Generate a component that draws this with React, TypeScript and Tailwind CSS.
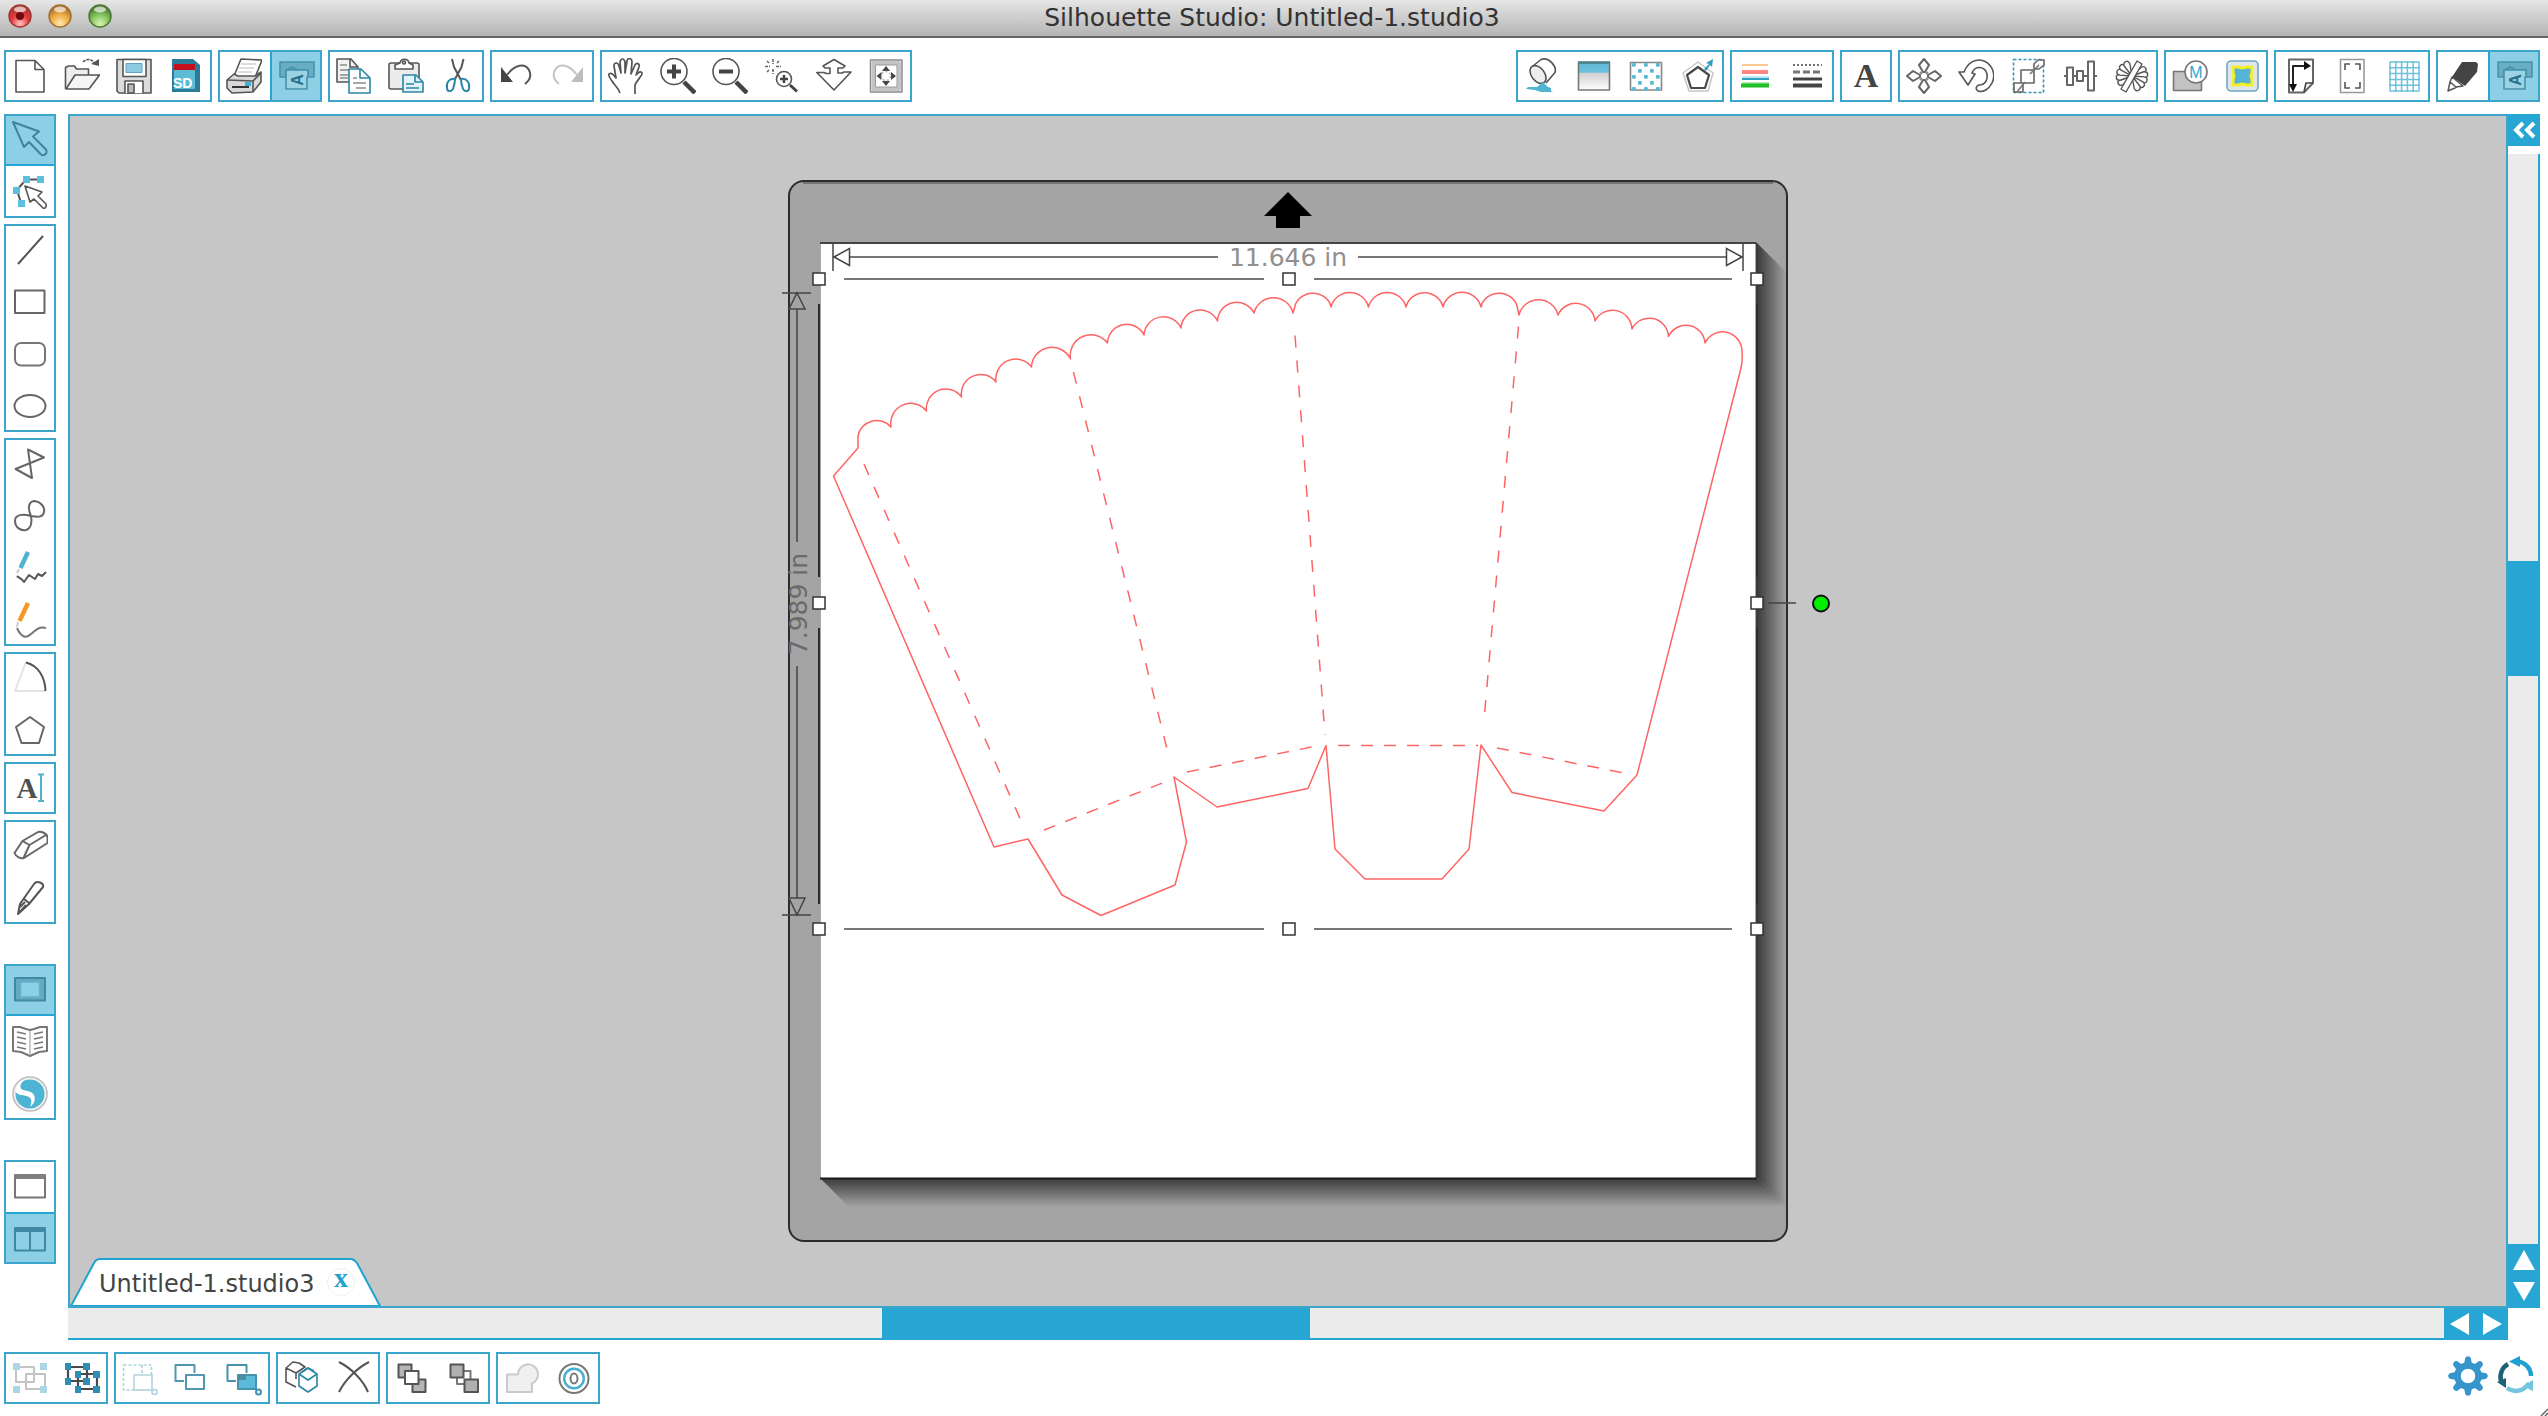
import React, { ReactNode } from "react";

const INK = "#555555";
const BLUE = "#2a86a5";
const SKY = "#4fb3d1";

function Ico({ children, stroke = INK, w = 1.6 }: { children: ReactNode; stroke?: string; w?: number }) {
  return (
    <svg viewBox="0 0 36 36" className="size-9 shrink-0" fill="none" stroke={stroke} strokeWidth={w} strokeLinejoin="round" aria-hidden="true">
      {children}
    </svg>
  );
}

type Tool = { label: string; icon: ReactNode; active?: boolean };

const cutterIcon = (
  <Ico stroke="#4792aa">
    <path d="M1 4h34v15h-6v-7H7v7H1z" fill="#69adc4" />
    <path d="M7 12h22v7h-1v12H7z" fill="#9bd3e4" />
    <path d="M8 12l5-3 6 3" />
    <text x="24" y="22" transform="rotate(-90 24 22)" textAnchor="middle" fontSize="16" fontWeight="700" fontFamily="Liberation Sans, sans-serif" fill="#25728c" stroke="none">A</text>
  </Ico>
);

const fileTools: Tool[] = [
  { label: "New", icon: <Ico><path d="M4 2.5h19l9 9V34H4zM23 2.5v9h9" /></Ico> },
  {
    label: "Open",
    icon: (
      <Ico>
        <path d="M1.500 31V9.500l3-1.500h6l2 3h12v6" fill="#eeeeee" />
        <path d="M2 31l9-14h24.500L25 31z" fill="#f5f5f5" />
        <path d="M19 4c4-4 9-3 12 2" strokeDasharray="3 1" />
        <path d="M27 6l8 2V1z" fill={INK} stroke="none" />
      </Ico>
    ),
  },
  {
    label: "Save",
    icon: (
      <Ico>
        <path d="M1 1.500h34V35H3l-2-2z" fill="#dcdcdc" />
        <path d="M7 1.500h23v17H7z" fill="#fff" />
        <path d="M10 5.500h16v9H10z" fill="#8fcbe0" stroke="#5aa7c4" strokeWidth="1" />
        <path d="M9 35V23h18v12" fill="#fff" />
        <path d="M12 26h6v9h-6z" fill="#bbb" />
      </Ico>
    ),
  },
  {
    label: "Save to SD card",
    icon: (
      <Ico>
        <path d="M4 1h21l7 6v27H4z" fill="#2a7c99" stroke="none" />
        <path d="M6 12h21v19H6z" fill="#5cbbd5" stroke="none" />
        <path d="M6 6h21v6H6z" fill="#c4101c" stroke="none" />
        <text x="5" y="30" fontSize="14" fontWeight="700" fontFamily="Liberation Sans, sans-serif" fill="#fff" stroke="none">SD</text>
      </Ico>
    ),
  },
];

const printTools: Tool[] = [
  {
    label: "Print",
    icon: (
      <Ico>
        <path d="M8 18l7-17 21 1-6 15" fill="#fff" />
        <path d="M15 6l15 0M13 10h15M12 14h14" stroke="#bbb" strokeWidth="1.200" />
        <path d="M1 22l7-6 4 2h17l6-4v10l-8 10-21 1-5-5z" fill="#d9d9d9" />
        <path d="M1 22l26 1 8-8M27 23v11" />
        <path d="M6 29h17" stroke="#333" strokeWidth="2" />
        <path d="M19 24h6v4h-6z" fill="#3fb0d5" stroke="none" />
      </Ico>
    ),
  },
  { label: "Send to Silhouette", icon: cutterIcon, active: true },
];

const clipTools: Tool[] = [
  {
    label: "Copy",
    icon: (
      <Ico>
        <path d="M1 1h14l7 8v15H1z" fill="#f2f2f2" />
        <path d="M14 1v8h8" />
        <path d="M4 7h7M4 12h10M4 17h9M4 20h8" strokeWidth="1.200" />
        <path d="M13 11h12l9 9v15H13z" fill="#fff" stroke={BLUE} />
        <path d="M24 11v9h10" stroke={BLUE} />
        <path d="M17 25h13M20 30h10M17 20h4" strokeWidth="1.200" />
      </Ico>
    ),
  },
  {
    label: "Paste",
    icon: (
      <Ico>
        <rect x="1" y="5" width="30" height="26" rx="2" fill="#ececec" />
        <path d="M7 11V7l5-2c1-5 8-5 9 0l4 2v4z" fill="#fff" />
        <circle cx="16" cy="4.500" r="1.500" />
        <path d="M15 17h13l7 7v10H15z" fill="#e2f3f8" stroke={BLUE} />
        <path d="M27 17v7h8M18 26h8M18 30h13" stroke={BLUE} />
      </Ico>
    ),
  },
  {
    label: "Cut",
    icon: (
      <Ico w={2}>
        <path d="M12 1l2 8 7 13M23.500 1l-2 8-7 13" />
        <path d="M15 21c-6-1-9 4-8 9 0 4 4 4 6 1 1-3 2-6 2-10zM21 21c6-1 9 4 8 9 0 4-4 4-6 1-1-3-2-6-2-10z" stroke={BLUE} />
      </Ico>
    ),
  },
];

const undoTools: Tool[] = [
  {
    label: "Undo",
    icon: (
      <Ico w={2}>
        <path d="M3 9v15h12z" fill="#444" stroke="none" />
        <path d="M9 17c8-11 18-12 22-5 3 6 1 10-4 14" />
      </Ico>
    ),
  },
  {
    label: "Redo",
    icon: (
      <Ico stroke="#c4c4c4" w={2}>
        <path d="M33 9v15H21z" fill="#bdbdbd" stroke="none" />
        <path d="M27 17C19 6 9 5 5 12c-3 6-1 10 4 14" />
      </Ico>
    ),
  },
];

const viewTools: Tool[] = [
  {
    label: "Pan",
    icon: (
      <Ico w={2}>
        <path d="M12 35c-2-6-6-8-8-12-2-3-4-5-3-7 2-2 5 1 7 4L6 8c0-4 4-4 5 0l2 7-1-11c1-4 4-4 5 0v11l2-12c1-4 5-3 5 1l-1 12 4-9c2-3 5-1 4 2l-3 8c2-3 5-4 6-2 1 2-5 7-7 12v9" strokeWidth="1.700" />
      </Ico>
    ),
  },
  {
    label: "Zoom In",
    icon: (
      <Ico>
        <circle cx="14" cy="13.500" r="13" />
        <path d="M14 6.500v14M7 13.500h14" stroke="#444" strokeWidth="4" />
        <path d="M24 24l11 11" stroke="#444" strokeWidth="4.500" />
      </Ico>
    ),
  },
  {
    label: "Zoom Out",
    icon: (
      <Ico>
        <circle cx="14" cy="13.500" r="13" />
        <path d="M7 13.500h14" stroke="#444" strokeWidth="4" />
        <path d="M24 24l11 11" stroke="#444" strokeWidth="4.500" />
      </Ico>
    ),
  },
  {
    label: "Zoom Selection",
    icon: (
      <Ico>
        <path d="M9 1v5M9 11v5M1 8.500h5M12 8.500h5M3 3l2 2M15 3l-2 2M3 14l2-2" stroke="#666" strokeDasharray="3 1" />
        <circle cx="20" cy="21" r="7.500" />
        <path d="M20 17v8M16 21h8" stroke="#444" strokeWidth="2.500" />
        <path d="M26 27l7 6.500" stroke="#444" strokeWidth="3" />
      </Ico>
    ),
  },
  {
    label: "Drag Zoom",
    icon: <Ico><path d="M18 1.500l11 6.500-2 2h-5v5h4l2-1h7L18 32 .800 14.500H8l2 1h4V10H9L7 8z" /></Ico>,
  },
  {
    label: "Fit to Page",
    icon: (
      <Ico>
        <rect x="2.500" y="2" width="31.500" height="32" stroke="#8a8a8a" strokeWidth="1.500" />
        <rect x="5.500" y="5" width="25.500" height="26" stroke="#c4c4c4" strokeWidth="4" />
        <rect x="7.500" y="7" width="21.500" height="22" stroke="#999" strokeWidth="1" />
        <path d="M18 8l4 5h-8zM18 28l4-5h-8zM8.500 18l5-4v8zM28 18l-5-4v8z" fill="#444" stroke="none" />
        <circle cx="18" cy="18" r="4.500" stroke="#bbb" strokeDasharray="2 2" />
      </Ico>
    ),
  },
];

const dots = [0, 1, 2, 3, 4].flatMap((r) => [0, 1, 2, 3, 4].map((c) => ({ r, c }))).filter((d) => (d.r + d.c) % 2 === 0);

const fillTools: Tool[] = [
  {
    label: "Fill Color",
    icon: (
      <Ico>
        <path d="M9 8l8-6.500c8-3 16 7 14 13L22 25" fill="#fff" />
        <ellipse cx="14" cy="16.500" rx="6.500" ry="10" transform="rotate(-38 14 16.500)" fill="#eeeeee" />
        <path d="M19 24l5 5 3 1v3l2 1H17l-6-2-9-1 2-2h9z" fill={SKY} stroke="none" />
      </Ico>
    ),
  },
  {
    label: "Fill Gradient",
    icon: (
      <Ico>
        <defs>
          <linearGradient id="fillGrad" x1="0" y1="0" x2="0" y2="1">
            <stop offset="0" stopColor="#5fb6d2" />
            <stop offset=".35" stopColor="#6cc3de" />
            <stop offset=".4" stopColor="#d0d0d0" />
            <stop offset="1" stopColor="#ffffff" />
          </linearGradient>
        </defs>
        <rect x="2.500" y="4.500" width="31" height="27.500" fill="url(#fillGrad)" stroke="#777" />
        <path d="M2 4.500h32" stroke="#4b7f8e" strokeWidth="2.500" />
      </Ico>
    ),
  },
  {
    label: "Fill Pattern",
    icon: (
      <Ico>
        <rect x="2.500" y="4.500" width="31" height="27.500" stroke="#888" />
        {dots.map((d) => (
          <rect key={d.r + "-" + d.c} x={4 + d.c * 6} y={5 + d.r * 6} width="3.800" height="3.800" rx="1" fill="#58b9d6" stroke="none" />
        ))}
      </Ico>
    ),
  },
  {
    label: "Shadow",
    icon: (
      <Ico>
        <path d="M18 4l15 11-5 18H9L3 15z" stroke="#c6c6c6" strokeWidth="1.500" />
        <path d="M18 9l11 8-4 13H11L7 17z" stroke="#484848" strokeWidth="2.200" />
        <path d="M24 11l5-5-3-1 7-4-1 8-2-2-4 6z" fill="#2f9cc2" stroke="none" />
      </Ico>
    ),
  },
];

const lineTools: Tool[] = [
  {
    label: "Line Color",
    icon: (
      <Ico>
        <path d="M4 7h26" stroke="#fbc98f" strokeWidth="2" />
        <path d="M4 14h26" stroke="#ff8585" strokeWidth="4" />
        <path d="M4 19h27" stroke="#bfe6f3" strokeWidth="2" />
        <path d="M4 21h27" stroke="#32a0c4" strokeWidth="2" />
        <path d="M4 25h27" stroke="#b5e8ae" strokeWidth="2" />
        <path d="M3 27.500h28" stroke="#1fbf26" strokeWidth="4" />
      </Ico>
    ),
  },
  {
    label: "Line Style",
    icon: (
      <Ico stroke="#444">
        <path d="M3 7h29" strokeDasharray="2 2" />
        <path d="M3 14h29" strokeWidth="3" stroke="#777" strokeDasharray="7 3" />
        <path d="M3 21h29" strokeWidth="3" />
        <path d="M3 27.500h29" strokeWidth="4" />
      </Ico>
    ),
  },
];

const textTools: Tool[] = [
  {
    label: "Text Style",
    icon: (
      <Ico>
        <text x="18" y="29" textAnchor="middle" fontSize="34" fontWeight="700" fontFamily="Liberation Serif, serif" fill="#444" stroke="none">A</text>
      </Ico>
    ),
  },
];

const petals = [60, 84, 108, 132, 156, 240, 264, 288, 312, 336];

const transformTools: Tool[] = [
  {
    label: "Move",
    icon: (
      <Ico w={2}>
        <path d="M18 1l5 6-4 7h-2l-4-7zM18 35l5-6-4-7h-2l-4 7zM1 18l6-5 7 4v2l-7 4zM35 18l-6-5-7 4v2l7 4z" stroke="#666" />
        <path d="M14 14l2 2M22 14l-2 2M14 22l2-2M22 22l-2-2" stroke="#888" />
      </Ico>
    ),
  },
  { label: "Rotate", icon: <Ico><path d="M6 14C10 4 18 0 26 3c9 4 12 14 8 22-3 6-9 10-14 8-3-2-2-5 1-6 6 0 9-5 8-11-2-8-12-9-15-1l3 1-7 11-9-13z" /></Ico> },
  {
    label: "Scale",
    icon: (
      <Ico>
        <rect x="3.500" y="1.500" width="30" height="33" stroke="#3793b1" strokeDasharray="3 2" />
        <path d="M11 12h13v13H11zM4 25h9v9H4zM24 11V6l4-4h6v5l-5 4z" fill="#fff" stroke="#666" />
        <path d="M7 34l8-10M20 16l9-9" stroke="#777" />
      </Ico>
    ),
  },
  {
    label: "Align",
    icon: <Ico stroke="#666" w={2}><path d="M5 9.500h6v17.500H5zM15 13h6v10h-6zM26 3.500h6v29h-6zM11 18h4M21 18h5M2 18h3M32 18h3" /></Ico>,
  },
  {
    label: "Replicate",
    icon: (
      <Ico stroke="#555" w={1.4}>
        {petals.map((a) => (
          <path key={a} d="M18 18l-3-12c0-5 6-5 6 0z" fill="#fff" transform={`rotate(${a} 18 18)`} />
        ))}
        <path d="M7 31L23 3l5 3L12 34z" fill="#fff" />
      </Ico>
    ),
  },
];

const modifyTools: Tool[] = [
  {
    label: "Modify",
    icon: (
      <Ico stroke="#777">
        <rect x="1.500" y="13.500" width="28" height="19" fill="#c2c2c2" />
        <circle cx="24" cy="14" r="11" fill="#fff" />
        <text x="24" y="20" textAnchor="middle" fontSize="16" fontFamily="Liberation Sans, sans-serif" fill="#35a5cc" stroke="none">M</text>
      </Ico>
    ),
  },
  {
    label: "Trace",
    icon: (
      <Ico>
        <rect x="3" y="3" width="31" height="30" rx="4" fill="#dfe6ea" stroke="#6fa9bf" />
        <path d="M9 9h5l4 1 5-1h5v6l-1 3 1 4v5h-5l-5-1-4 1H9v-5l1-4-1-3z" fill="#55b4d6" stroke="#f4ee26" strokeWidth="3" />
      </Ico>
    ),
  },
];

const pageTools: Tool[] = [
  {
    label: "Page Setup",
    icon: (
      <Ico stroke="#444">
        <path d="M7 1.500h24V25l-9 9.500H7z" strokeWidth="2" stroke="#666" />
        <path d="M22 34l2-9h7" />
        <path d="M11 29V8h14" stroke="#222" strokeWidth="2" />
        <path d="M22 3l7 5-7 4zM7 26l4 8 4-8z" fill="#111" stroke="none" />
      </Ico>
    ),
  },
  {
    label: "Registration Marks",
    icon: (
      <Ico>
        <rect x="6.500" y="1.500" width="23.500" height="33" stroke="#999" />
        <path d="M11 12V6h5M21 6h5v6M11 24v6h5M21 30h5v-6" stroke="#555" />
      </Ico>
    ),
  },
  { label: "Grid", icon: <Ico stroke="#6cc2dc"><path d="M4 4h29v29H4zM9.800 3v31M15.600 3v31M21.400 3v31M27.200 3v31M3 9.800h31M3 15.600h31M3 21.400h31M3 27.200h31" strokeWidth="1.500" /></Ico> },
];

const sendTools: Tool[] = [
  {
    label: "Cut Settings",
    icon: (
      <Ico>
        <path d="M18 4h14l2 2-1 8-12 14-13-9z" fill="#444" stroke="none" />
        <path d="M8 19l-2 5 6 5 7-1zM6 24l-2 9 9-4" strokeWidth="1.500" />
      </Ico>
    ),
  },
  { label: "Send", icon: cutterIcon, active: true },
];

const selectTools: Tool[] = [
  { label: "Select", active: true, icon: <Ico stroke="#40849b" w={2}><path d="M1 1l26 9.500-6 5 13 13c2 4-2 7-5 5L17 21l-5 5z" /></Ico> },
  {
    label: "Edit Points",
    icon: (
      <Ico>
        <path d="M28 5.500H14L5 16l4 13" strokeWidth="2" />
        <path d="M11 2h7v7h-7zM25 2h7v7h-7zM1 13h7v7H1zM6 26h7v7H6z" fill="#5cbfdb" stroke="none" />
        <path d="M13 12l17 6-4 4 8 8c1 3-1 5-3 4l-9-9-4 3z" fill="#fff" />
      </Ico>
    ),
  },
];

const shapeTools: Tool[] = [
  { label: "Line", icon: <Ico w={2}><path d="M6 32L31 4" /></Ico> },
  { label: "Rectangle", icon: <Ico stroke="#666" w={2}><rect x="3" y="6.500" width="29.500" height="22.500" /></Ico> },
  { label: "Rounded Rectangle", icon: <Ico stroke="#777" w={2}><rect x="3" y="7" width="30" height="22.500" rx="6" /></Ico> },
  { label: "Ellipse", icon: <Ico stroke="#666" w={2}><ellipse cx="18" cy="18" rx="15.500" ry="11" /></Ico> },
];

const drawTools: Tool[] = [
  { label: "Polygon", icon: <Ico stroke="#666" w={2}><path d="M16 3.500l16 8L3.500 23 20 32z" /></Ico> },
  { label: "Curve", icon: <Ico stroke="#666" w={2}><path d="M19 18c-4-9-2-15 4-15 6 1 10 6 9 11-1 6-7 5-13 4-8-2-16-2-16 5 0 6 5 10 11 9 6-2 6-8 5-14z" /></Ico> },
  {
    label: "Freehand",
    icon: (
      <Ico w={2}>
        <path d="M16 2L8.500 18" stroke={SKY} strokeWidth="4.500" />
        <path d="M7 19l-2 4" stroke="#ccc" />
        <path d="M5 26c2 2 4 2 7 6l5-7 6 4 3-5 4 2 4-4" />
      </Ico>
    ),
  },
  {
    label: "Smooth Freehand",
    icon: (
      <Ico w={2}>
        <path d="M16 1L7.500 19" stroke="#f7962b" strokeWidth="4.500" />
        <path d="M6 20l-1 5" stroke="#ccc" />
        <path d="M5 26c4 9 9 11 14 6 5-4 8-8 15-6" stroke="#777" />
      </Ico>
    ),
  },
];

const arcTools: Tool[] = [
  {
    label: "Arc",
    icon: (
      <Ico w={2}>
        <path d="M14 2L3 31h30" stroke="#e4e4e4" />
        <path d="M14 2.500c12 3 19 14 19.500 28.500" />
      </Ico>
    ),
  },
  { label: "Regular Polygon", icon: <Ico stroke="#666" w={2}><path d="M18 5l14 10-5 16H9.500L4 15z" /></Ico> },
];

const typeTools: Tool[] = [
  {
    label: "Text",
    icon: (
      <Ico>
        <text x="15" y="28" textAnchor="middle" fontSize="29" fontWeight="700" fontFamily="Liberation Serif, serif" fill="#505050" stroke="none">A</text>
        <path d="M29 5v26M26 4.500h6M26 31h6" stroke={SKY} strokeWidth="2" />
      </Ico>
    ),
  },
];

const eraseTools: Tool[] = [
  { label: "Eraser", icon: <Ico stroke="#666" w={2}><path d="M2.500 25l8-12L26 4c4-1 9 2 9.500 5v6L12 30c-3 1-8-1-9.500-5zM10.500 13l7 4-6 13M17.500 17L34 7" /></Ico> },
  { label: "Knife", icon: <Ico stroke="#555" w={2}><path d="M6 34l2-10L22 4c3-4 10-1 9 3L17 24zM12 19l5 4M8 27l5-5M7 33l7-8" /></Ico> },
];

const libraryTools: Tool[] = [
  {
    label: "Drawing Area",
    active: true,
    icon: (
      <Ico stroke="#4089a2" w={2}>
        <rect x="3" y="7" width="30" height="22.500" fill="#67aabf" />
        <rect x="8.500" y="11" width="19" height="15" fill="#8dd0e6" stroke="#5fb3cd" strokeWidth="1.500" />
      </Ico>
    ),
  },
  {
    label: "Library",
    icon: (
      <Ico stroke="#777">
        <path d="M18 6L14 5 8 3H1v24l8 1 9 4 9-4 8-1V3h-7l-6 2z" strokeWidth="2" />
        <path d="M18 7v24" stroke="#bbb" />
        <path d="M5 8l9 2M5 13l9 2M5 18l9 2M5 23l9 2M31 8l-9 2M31 13l-9 2M31 18l-9 2M31 23l-9 2" strokeWidth="1.400" />
      </Ico>
    ),
  },
  {
    label: "Online Store",
    icon: (
      <Ico>
        <circle cx="18" cy="18" r="17" fill="#f2f2f2" stroke="#bdbdbd" />
        <circle cx="18" cy="18" r="14.500" fill="#4db5d3" stroke="none" />
        <path d="M3.500 16C4 9 8 4 12 4c-4 4-5 8-1 10 4 1 9 1 11 5 2 5 0 9-4 12 2-4 2-8-1-10-4-2-9 0-13.500-5z" fill="#fff" stroke="none" />
        <path d="M4 18c5 3 10 1 13 4" stroke="#4db5d3" strokeWidth="1" />
      </Ico>
    ),
  },
];

const windowTools: Tool[] = [
  {
    label: "Single View",
    icon: (
      <Ico stroke="#777" w={2}>
        <rect x="3" y="7" width="30" height="22.500" fill="#fff" />
        <path d="M3 8.500h30" stroke="#808080" strokeWidth="5" />
      </Ico>
    ),
  },
  {
    label: "Split View",
    active: true,
    icon: (
      <Ico stroke="#4089a2" w={2}>
        <rect x="3" y="7" width="30" height="22.500" />
        <path d="M3 8.500h30" strokeWidth="5" />
        <path d="M18 11v18" />
      </Ico>
    ),
  },
];

const groupTools: Tool[] = [
  {
    label: "Group",
    icon: (
      <Ico stroke="#c4c4c4" w={2}>
        <path d="M4 7h18v15H4zM14 14h19v15H14z" />
        <path d="M1 3h7v7H1zM28 3h7v7h-7zM1 26h7v7H1zM28 26h7v7h-7z" fill="#abd6e3" stroke="none" />
      </Ico>
    ),
  },
  {
    label: "Ungroup",
    icon: (
      <Ico stroke="#4a4a4a" w={2.2}>
        <path d="M4 7h19v14H4zM14 14h19v15H14z" />
        <path d="M1 3h6v7H1zM19 3h7v7h-7zM1 18h6v7H1zM19 18h7v7h-7zM11 11h6v7h-6zM29 11h7v7h-7zM11 26h6v7h-6zM29 26h7v7h-7z" fill="#2d8fb1" stroke="none" />
      </Ico>
    ),
  },
];

const compoundTools: Tool[] = [
  {
    label: "Select All",
    icon: (
      <Ico stroke="#a9d3e1">
        <path d="M1.500 5h28v25h-28zM20 5v10" strokeDasharray="3 2" />
        <rect x="12" y="15" width="18" height="15" fill="#fff" stroke="#b5d2dc" />
        <circle cx="32.500" cy="32" r="2.500" />
      </Ico>
    ),
  },
  {
    label: "Duplicate",
    icon: (
      <Ico stroke="#5197af" w={2}>
        <path d="M10 21H1.500V5h19v8" />
        <rect x="12" y="15" width="18" height="14" fill="#fff" />
      </Ico>
    ),
  },
  {
    label: "Delete Selection",
    icon: (
      <Ico stroke="#4593ad" w={2}>
        <path d="M10 21H1.500V5h19v8" />
        <rect x="12" y="15" width="18" height="14" fill="#59bbd7" />
        <path d="M12 14h8v6h-8z" fill="#4a8ca2" stroke="none" />
        <circle cx="32.500" cy="32" r="2.500" />
      </Ico>
    ),
  },
];

const pathTools: Tool[] = [
  {
    label: "Make Compound Path",
    icon: (
      <Ico>
        <path d="M2 8l7-6 6 1 6 4-9 6zM2 8v14l10 5M12 13v6M2 8l10 5" />
        <path d="M15 14l9-6 9 6v12l-9 6-9-6z" fill="#fff" stroke={BLUE} />
        <path d="M15 14l9 6 9-6M18 12l6-4 6 3" stroke={BLUE} />
      </Ico>
    ),
  },
  { label: "Release Compound Path", icon: <Ico><path d="M3 2c12 6 24 18 29 30M33 2C21 8 9 20 3 32" strokeWidth="2" /></Ico> },
];

const orderTools: Tool[] = [
  {
    label: "Bring to Front",
    icon: (
      <Ico stroke="#555" w={2}>
        <path d="M4.500 4.500h13v13h-13zM18.500 19.500h13v12.500h-13z" fill="#b5b5b5" />
        <path d="M11 11h13.500v13H11z" fill="#fff" />
      </Ico>
    ),
  },
  {
    label: "Send to Back",
    icon: (
      <Ico stroke="#555" w={2}>
        <path d="M11 11h13.500v13H11z" fill="#fff" stroke="#777" />
        <path d="M4.500 4.500h13v13h-13zM18.500 19.500h13.500v12.500H18.500z" fill="#b0b0b0" />
      </Ico>
    ),
  },
];

const weldTools: Tool[] = [
  { label: "Weld", icon: <Ico stroke="#cacaca"><path d="M3 14.500h11a10 10 0 1 1 14 9V32H3z" fill="#f0f0f0" strokeWidth="2" /></Ico> },
  {
    label: "Offset",
    icon: (
      <Ico stroke="#777" w={2}>
        <circle cx="18" cy="18.500" r="14.500" />
        <circle cx="18" cy="18.500" r="9.800" stroke="#45b0d2" strokeWidth="2.400" />
        <ellipse cx="18" cy="18.500" rx="3.500" ry="5" />
      </Ico>
    ),
  },
];

function ToolGroup({ tools, vertical = false }: { tools: Tool[]; vertical?: boolean }) {
  return (
    <div role="group" className={`flex shrink-0 outline-2 -outline-offset-2 outline-[#3ca5cb] ${vertical ? "flex-col" : ""}`}>
      {tools.map((t, i) => {
        const edge = !t.active ? "" : vertical ? (i === 0 ? "border-b-2" : "border-t-2") : "border-l-2";
        return (
          <button
            key={t.label}
            type="button"
            aria-label={t.label}
            aria-pressed={!!t.active}
            className={`flex size-[52px] shrink-0 items-center justify-center border-[#28a6d3] ${edge} ${t.active ? "bg-[#8dd0e6]" : "bg-white"}`}
          >
            {t.icon}
          </button>
        );
      })}
    </div>
  );
}

const lights = [
  { label: "Close", ring: "#a33a36", base: "#e8383d", glow: "#ffc9c2" },
  { label: "Minimize", ring: "#a5712f", base: "#efac45", glow: "#ffeab0" },
  { label: "Zoom", ring: "#4d7a36", base: "#86c55f", glow: "#d8f5b4" },
];

function TitleBar() {
  return (
    <header className="relative flex h-[38px] items-center justify-center border-b-2 border-[#666] bg-linear-to-b from-[#e6e6e6] to-[#b4b4b4]">
      <div className="absolute top-1 left-2 flex gap-4">
        {lights.map((l, i) => (
          <button key={l.label} type="button" aria-label={l.label} className="size-6">
            <svg viewBox="0 0 24 24" className="size-6" aria-hidden="true">
              <defs>
                <radialGradient id={"light" + i} cx=".5" cy=".85" r=".75">
                  <stop offset="0" stopColor={l.glow} />
                  <stop offset=".55" stopColor={l.base} />
                  <stop offset="1" stopColor={l.ring} />
                </radialGradient>
              </defs>
              <circle cx="12" cy="12" r="11" fill={`url(#light${i})`} stroke={l.ring} strokeWidth="1.500" />
              <ellipse cx="12" cy="5.500" rx="6" ry="3" fill="#fff" opacity=".65" />
              {i === 0 && <circle cx="12" cy="12" r="4" fill="#6e0a10" />}
            </svg>
          </button>
        ))}
      </div>
      <h1 className="pr-1 font-['DejaVu_Sans',sans-serif] text-[25px] leading-8 text-[#333]">Silhouette Studio: Untitled-1.studio3</h1>
    </header>
  );
}

const cusps: [number, number][] = [
  [891, 427], [926.5, 411], [961.5, 397], [996, 382], [1031.5, 367], [1070.5, 359],
  [1107.5, 343], [1144, 335], [1181, 328], [1217.5, 321], [1254, 313], [1293, 313],
  [1331, 307], [1368.5, 307], [1406, 307], [1443, 307], [1481, 307], [1519, 315],
  [1558, 315], [1595, 321], [1632, 329], [1668.5, 336.5], [1705, 343],
];

function scallops() {
  let d = "M833.500 476L858 448V436A19 19 0 0 1 891 427";
  for (let i = 1; i < cusps.length; i++) {
    const [x0, y0] = cusps[i - 1];
    const [x, y] = cusps[i];
    if (x === 1331) {
      // First flat scallop rises from the lower fold point.
      d += "L1294.500 308A18.500 17 0 0 1 1331 307";
    } else if (x === 1519) {
      // Last flat scallop drops back to the lower fold point.
      d += "A18.500 17 0 0 1 1517.500 308L1519 315";
    } else {
      const r = Math.hypot(x - x0, y - y0) / 2 + 0.6;
      d += `A${r} ${r} 0 0 1 ${x} ${y}`;
    }
  }
  return d + "A19.500 20 0 0 1 1742 353Q1743 362 1740 372L1637 775";
}

const outline =
  "M833.500 476L994 847L1028 839L1062 895L1101 915.500L1175 885L1186.500 842L1174 777L1217 807L1308 788.500L1326 745.500L1335 849L1365 879H1442L1469 849L1481 745L1512 792.500L1604 811L1637 775";

const handles = [
  [819, 279], [1289, 279], [1757, 279], [819, 603], [1757, 603], [819, 929], [1289, 929], [1757, 929],
];

function Mat() {
  return (
    <svg viewBox="738 180 1100 1062" className="h-[1062px] w-[1100px] shrink-0" fill="none" role="img" aria-label="Cutting mat with popcorn box template">
      <defs>
        <linearGradient id="shadeR" gradientUnits="userSpaceOnUse" x1="1757" y1="0" x2="1786" y2="0">
          <stop offset="0" stopColor="#3a3a3a" />
          <stop offset="1" stopColor="#a0a0a0" />
        </linearGradient>
        <linearGradient id="shadeB" gradientUnits="userSpaceOnUse" x1="0" y1="1178" x2="0" y2="1207">
          <stop offset="0" stopColor="#3a3a3a" />
          <stop offset="1" stopColor="#a4a4a4" />
        </linearGradient>
      </defs>
      <rect x="789" y="181" width="998" height="1060" rx="15" fill="#a4a4a4" stroke="#2c2c2c" strokeWidth="2" />
      <path d="M803 183H1773" stroke="#666" strokeWidth="1.500" />
      <path d="M1756 242L1786 272V1207L1756 1177z" fill="url(#shadeR)" />
      <path d="M820 1178L849 1207H1786L1757 1178z" fill="url(#shadeB)" />
      <rect x="820" y="243" width="936" height="935" fill="#fff" />
      <path d="M820.500 243V1178M1755.500 243V1178" stroke="#a8a8a8" strokeWidth="1" />
      <path d="M820 243H1756" stroke="#444" strokeWidth="2" />
      <path d="M820 1178.500H1757" stroke="#1a1a1a" strokeWidth="2" />
      <path d="M819 304V577M819 628V904M1757 304V577M1757 628V904" stroke="#2b2b2b" strokeWidth="2" />
      <path d="M1288 192L1312 216H1300V228H1276V216H1264z" fill="#000" />

      <g stroke="#777" strokeWidth="2">
        <path d="M849 257H1218M1358 257H1727" />
        <path d="M844 279H1264M1314 279H1732M844 929H1264M1314 929H1732" />
      </g>
      <g stroke="#444" strokeWidth="1.500">
        <path d="M833 243V271M1743 243V271M834 257L849.500 248.500V265.500zM1742 257L1726.500 248.500V265.500z" />
        <path d="M782 293H811M782 915H811M797 293L805 309H789zM797 915L805 898H789z" />
        <path d="M797 309V542M797 666V898M1768 603H1796" />
      </g>
      <text x="1288" y="266" textAnchor="middle" fontSize="25" fontFamily="DejaVu Sans, sans-serif" fill="#909090">11.646 in</text>
      <text x="807" y="604" transform="rotate(-90 807 604)" textAnchor="middle" fontSize="25" fontFamily="DejaVu Sans, sans-serif" fill="#6a6a6a">7.989 in</text>

      <g stroke="#ff6464" strokeWidth="1.500" strokeLinejoin="round">
        <path d={scallops()} />
        <path d={outline} />
        <g strokeDasharray="12 13">
          <path d="M864 464L1022 823" />
          <path d="M1073.500 372L1168 753" />
          <path d="M1295 335.500L1325 735" />
          <path d="M1518.500 326.500L1484 720" />
        </g>
        <g strokeDasharray="12 11">
          <path d="M1044 830L1170 780M1187 772L1314 746.500M1338 745.500H1478M1497 748L1624 773" />
        </g>
      </g>

      {handles.map(([x, y]) => (
        <rect key={x + "-" + y} x={x - 6} y={y - 6} width="12" height="12" fill="#fff" stroke="#333" strokeWidth="1.500" />
      ))}
      <circle cx="1821" cy="603.500" r="8" fill="#00f000" stroke="#111" strokeWidth="2" />
    </svg>
  );
}

function DocumentTab() {
  return (
    <div className="relative h-12 w-[312px]">
      <svg viewBox="0 0 312 48" className="absolute inset-0 size-full" aria-hidden="true">
        <path d="M1 48L24 5Q26 1 30 1H280Q284 1 287 5L310 48z" fill="#fff" stroke="#1fa3d0" strokeWidth="2" />
      </svg>
      <div className="relative flex h-full items-start pt-2.5 pl-[29px] font-['DejaVu_Sans',sans-serif] text-[24px] leading-8 text-[#444]">
        <span className="w-[228px] whitespace-nowrap">Untitled-1.studio3</span>
        <button type="button" aria-label="Close tab" className="flex size-7 items-center justify-center rounded-full border border-[#eee] pb-2 font-['Liberation_Serif',serif] text-[28px] leading-none font-bold text-[#1fa3d0]">
          x
        </button>
      </div>
    </div>
  );
}

function Triangle({ d, label }: { d: string; label: string }) {
  return (
    <button type="button" aria-label={label} className="size-8 shrink-0">
      <svg viewBox="0 0 32 32" className="size-8" aria-hidden="true">
        <path d={d} fill="#fff" />
      </svg>
    </button>
  );
}

function Workspace() {
  return (
    <main className="mr-2 grid flex-1 grid-cols-[1fr_32px] grid-rows-[1fr_32px]">
      <section aria-label="Drawing area" className="flex flex-col justify-between overflow-hidden border-2 border-[#3ca5cb] bg-[#c6c6c6]">
        <div className="flex justify-center pt-16">
          <Mat />
        </div>
        <DocumentTab />
      </section>
      <div className="flex flex-col">
        <button type="button" aria-label="Expand panel" className="size-8 bg-[#28a6d3]">
          <svg viewBox="0 0 32 32" className="size-8" fill="none" stroke="#fff" strokeWidth="4" aria-hidden="true">
            <path d="M15 9l-7 7 7 7M26 9l-7 7 7 7" />
          </svg>
        </button>
        <div className="mt-2 flex flex-1 flex-col border-r-2 border-[#28a6d3] bg-[#ebebeb]">
          <div className="flex-[407]" />
          <div className="flex-[115] bg-[#28a6d3]" />
          <div className="flex-[568]" />
        </div>
        <div className="flex flex-col bg-[#28a6d3]">
          <Triangle label="Scroll up" d="M16 6L27 26H5z" />
          <Triangle label="Scroll down" d="M5 6H27L16 25z" />
        </div>
      </div>
      <div className="flex">
        <div className="flex flex-1 border-b-2 border-[#28a6d3] bg-[#ebebeb]">
          <div className="flex-[814]" />
          <div className="flex-[428] bg-[#28a6d3]" />
          <div className="flex-[1134]" />
        </div>
        <div className="flex bg-[#28a6d3]">
          <Triangle label="Scroll left" d="M6 16L25 5V27z" />
          <Triangle label="Scroll right" d="M7 5L26 16L7 27z" />
        </div>
      </div>
    </main>
  );
}

const teeth = [0, 45, 90, 135, 180, 225, 270, 315];

export default function App() {
  return (
    <div className="flex min-h-screen flex-col bg-white">
      <TitleBar />
      <nav aria-label="Main tools" className="flex justify-between py-3 pr-2 pl-1">
        <div className="flex gap-1.5">
          <ToolGroup tools={fileTools} />
          <ToolGroup tools={printTools} />
          <ToolGroup tools={clipTools} />
          <ToolGroup tools={undoTools} />
          <ToolGroup tools={viewTools} />
        </div>
        <div className="flex gap-1.5">
          <ToolGroup tools={fillTools} />
          <ToolGroup tools={lineTools} />
          <ToolGroup tools={textTools} />
          <ToolGroup tools={transformTools} />
          <ToolGroup tools={modifyTools} />
          <ToolGroup tools={pageTools} />
          <ToolGroup tools={sendTools} />
        </div>
      </nav>
      <div className="flex flex-1">
        <aside aria-label="Drawing tools" className="mr-3 ml-1 flex flex-col gap-10">
          <div className="flex flex-col gap-1.5">
            <ToolGroup vertical tools={selectTools} />
            <ToolGroup vertical tools={shapeTools} />
            <ToolGroup vertical tools={drawTools} />
            <ToolGroup vertical tools={arcTools} />
            <ToolGroup vertical tools={typeTools} />
            <ToolGroup vertical tools={eraseTools} />
          </div>
          <ToolGroup vertical tools={libraryTools} />
          <ToolGroup vertical tools={windowTools} />
        </aside>
        <Workspace />
      </div>
      <footer className="relative flex justify-between py-3 pr-3 pl-1">
        <div className="flex gap-1.5">
          <ToolGroup tools={groupTools} />
          <ToolGroup tools={compoundTools} />
          <ToolGroup tools={pathTools} />
          <ToolGroup tools={orderTools} />
          <ToolGroup tools={weldTools} />
        </div>
        <div className="flex gap-2 pt-1">
          <button type="button" aria-label="Preferences" className="size-10">
            <svg viewBox="0 0 40 40" className="size-10" aria-hidden="true">
              {teeth.map((a) => (
                <path key={a} d="M17 7l1-5q2-2 4 0l1 5z" fill="#3596cb" stroke="#3596cb" strokeWidth="1.500" transform={`rotate(${a} 20 20)`} />
              ))}
              <circle cx="20" cy="20" r="10.500" fill="none" stroke="#3596cb" strokeWidth="6.500" />
            </svg>
          </button>
          <button type="button" aria-label="Sync library" className="size-10">
            <svg viewBox="0 0 40 40" className="size-10" fill="none" strokeWidth="4.500" aria-hidden="true">
              <path d="M20 5.500A14.500 14.500 0 0 1 35 20" stroke="#1fa0d2" />
              <path d="M13 5.500L24 0V11z" fill="#1fa0d2" />
              <path d="M33 27A15 15 0 0 1 11 32" stroke="#74c5de" />
              <path d="M37 24V35L27 30z" fill="#74c5de" />
              <path d="M12 8A15 15 0 0 0 5 25" stroke="#1d6375" />
              <path d="M1 26L10 22V32z" fill="#1d6375" />
            </svg>
          </button>
        </div>
        <svg viewBox="0 0 8 8" className="absolute right-0 bottom-0 size-2" aria-hidden="true">
          <path d="M1 8L8 1M5 8L8 5" stroke="#666" strokeWidth="1.500" />
        </svg>
      </footer>
    </div>
  );
}
